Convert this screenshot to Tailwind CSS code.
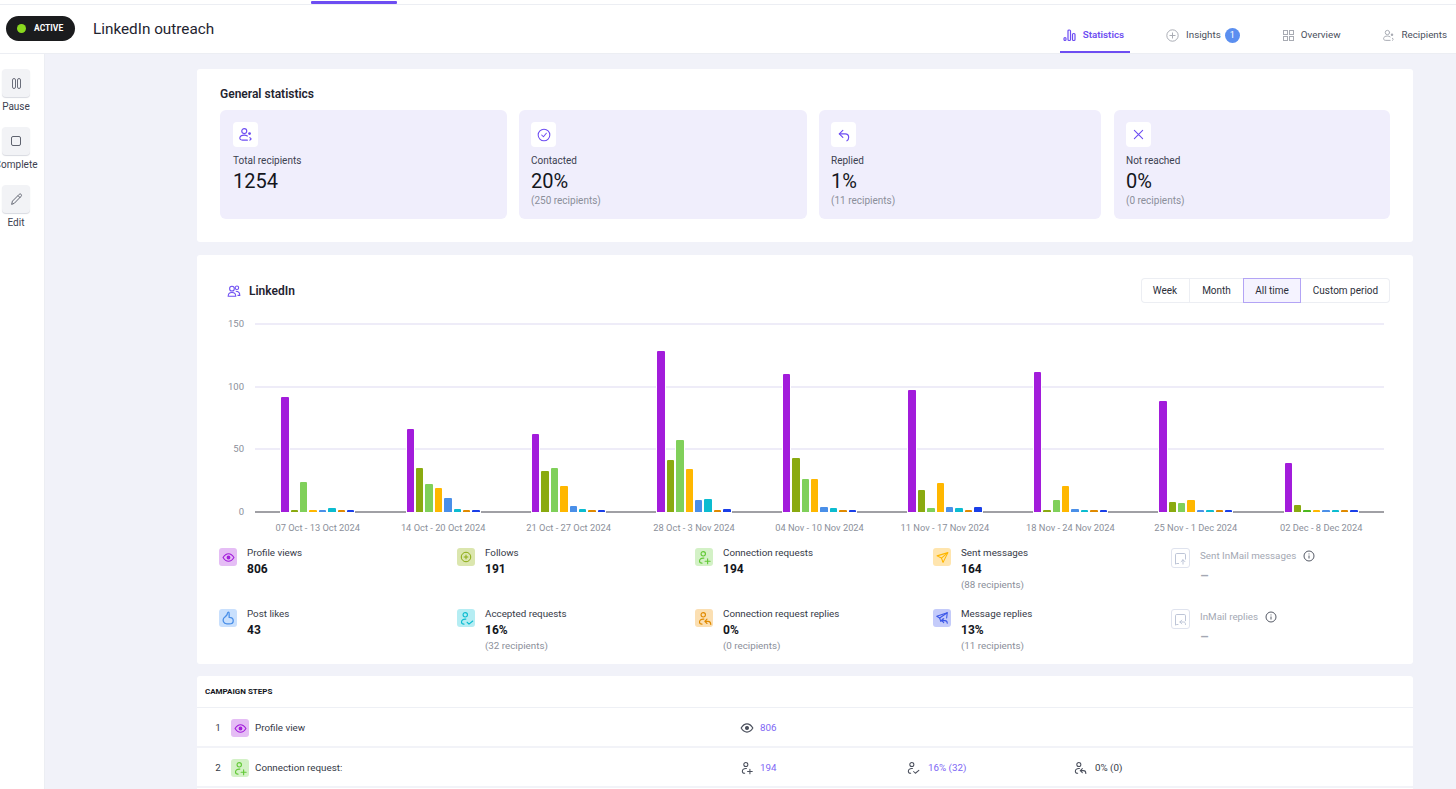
<!DOCTYPE html>
<html lang="en">
<head>
<meta charset="utf-8">
<title>LinkedIn outreach</title>
<script src="https://cdn.jsdelivr.net/npm/@tailwindcss/browser@4"></script>
</head>
<body class="h-[789px] w-[1456px] overflow-hidden bg-[#f1f2f9] font-['Roboto',sans-serif] text-[#1f2430]">
<svg class="hidden" width="0" height="0">
  <symbol id="i-eye" viewBox="0 0 24 24" fill="none" stroke="currentColor" stroke-width="2"><path d="M2 12c3-5 6-7 10-7s7 2 10 7c-3 5-6 7-10 7s-7-2-10-7z"/><circle cx="12" cy="12" r="2.5" fill="currentColor"/></symbol>
  <symbol id="i-plus-c" viewBox="0 0 24 24" fill="none" stroke="currentColor" stroke-width="2"><circle cx="12" cy="12" r="9.5"/><path d="M12 7.5v9M7.5 12h9"/></symbol>
  <symbol id="i-padd" viewBox="0 0 24 24" fill="none" stroke="currentColor" stroke-width="1.8" stroke-linecap="round"><circle cx="10" cy="6" r="3.5"/><path d="M11 13c-4-.5-7 1.500-7 4.500 0 2 1.500 3.500 4 3.500"/><path d="M13 18h8M17 14v8"/></symbol>
  <symbol id="i-pchk" viewBox="0 0 24 24" fill="none" stroke="currentColor" stroke-width="1.8" stroke-linecap="round" stroke-linejoin="round"><circle cx="10" cy="6" r="3.500"/><path d="M11 13c-4-.5-7 1.500-7 4.500 0 2 1.500 3.500 4 3.500"/><path d="M13 18l3 3 6-5"/></symbol>
  <symbol id="i-prep" viewBox="0 0 24 24" fill="none" stroke="currentColor" stroke-width="1.8" stroke-linecap="round" stroke-linejoin="round"><circle cx="10" cy="6" r="3.500"/><path d="M11 13c-4-.5-7 1.500-7 4.500 0 2 1.500 3.500 4 3.500"/><path d="M16 13l-3.500 3.500 3.500 3.500M12.500 16.500H18c2 0 4 1.500 4 5"/></symbol>
  <symbol id="i-send" viewBox="0 0 24 24" fill="none" stroke="currentColor" stroke-width="2" stroke-linejoin="round"><path d="M22 3L2 9l8 4 3 8z"/><path d="M22 3L10 13"/></symbol>
  <symbol id="i-sendrep" viewBox="0 0 24 24" fill="none" stroke="currentColor" stroke-width="1.800" stroke-linejoin="round" stroke-linecap="round"><path d="M21 3L3 9l5 3 2 6 3-4"/><path d="M21 3l-1 9M21 3L8 12"/><path d="M15 13l-3.500 3.500L15 20M11.500 16.500H17c2 0 4 1 4 4.500"/></symbol>
  <symbol id="i-like" viewBox="0 0 24 24" fill="none" stroke="currentColor" stroke-width="2.200" stroke-linejoin="round"><path d="M13 2c-2 0-2 2-2.500 4S6 10 4.500 12.500C2.500 16 4 22 10 22h4c4 0 7-2 7-5.500 0-4-3-5.500-7-5.500V5c0-2-.5-3-1-3z"/></symbol>
  <symbol id="i-im-up" viewBox="0 0 24 24" fill="none" stroke="currentColor" stroke-width="1.500" stroke-linecap="round" stroke-linejoin="round"><path d="M9 20H6l-2 1V6a2 2 0 0 1 2-2h12a2 2 0 0 1 2 2v7"/><path d="M16 21v-7M13 17l3-3 3 3"/></symbol>
  <symbol id="i-im-rep" viewBox="0 0 24 24" fill="none" stroke="currentColor" stroke-width="1.500" stroke-linecap="round" stroke-linejoin="round"><path d="M8 20H6l-2 1V6a2 2 0 0 1 2-2h12a2 2 0 0 1 2 2v8"/><path d="M14 13l-3 3 3 3M11 16h6c2 0 3 1 3 4"/></symbol>
  <symbol id="i-info" viewBox="0 0 24 24" fill="none" stroke="currentColor" stroke-width="2"><circle cx="12" cy="12" r="10"/><path d="M12 11v6M12 7v1.800"/></symbol>
  <symbol id="i-rcp" viewBox="0 0 24 24" fill="none" stroke="currentColor" stroke-width="1.800" stroke-linecap="round"><circle cx="10" cy="6.500" r="4"/><path d="M15 21H7c-3 0-4.500-1.500-4-4 .5-2.500 3-4 7-4 2 0 3.500.5 5 1.500"/><circle cx="18.500" cy="10.500" r="2.300" fill="currentColor" stroke="none"/><path d="M19 17l2 2-2 2"/></symbol>
</svg>

<div class="h-[5px] border-b border-[#eceef3] bg-white pt-[1px]">
  <div class="ml-[311px] h-[3px] w-[86px] rounded-[1px] bg-[#6d4df2]"></div>
</div>

<header class="flex h-[49px] items-stretch border-b border-[#eceef3] bg-white">
  <div class="ml-[6px] mt-[11px] flex h-[25px] w-[69px] items-center rounded-full bg-[#1b1c1e] pl-[11px]">
    <span class="h-[9px] w-[9px] rounded-full bg-[#8ad91f]"></span>
    <span class="ml-[8px] text-[8.500px] font-bold text-white">ACTIVE</span>
  </div>
  <h1 class="ml-[18px] mt-[14px] h-[20px] text-[15.300px] leading-[20px] font-normal">LinkedIn outreach</h1>
  <nav class="ml-auto mr-[6px] flex gap-[35px] text-[9.800px] text-[#4a4f5c]">
    <div class="-mr-[2px] flex items-center gap-[7px] border-b-2 border-[#6d4df2] pl-[3px] pr-[6px] pt-[14px] font-semibold text-[#6d4df2]">
      <svg class="h-[14px] w-[13px]" viewBox="0 0 13 14" fill="none" stroke="currentColor" stroke-width="1.200"><rect x="1" y="9.500" width="2" height="3" rx="1"/><rect x="5" y="2" width="2.500" height="10.500" rx="1"/><rect x="9.500" y="5.500" width="2.500" height="7" rx="1"/></svg>
      <span>Statistics</span>
    </div>
    <div class="mr-[2px] flex items-center px-[3px] pt-[13px]">
      <svg class="h-[13px] w-[13px] text-[#a8abb3]" viewBox="0 0 24 24" fill="none" stroke="currentColor" stroke-width="1.800"><circle cx="12" cy="12" r="10.500"/><path d="M12 6.500v11M6.500 12h11"/></svg>
      <span class="ml-[7px]">Insights</span>
      <span class="ml-[4px] flex h-[15px] w-[15px] items-center justify-center rounded-full bg-[#5b8ff0] text-[9px] text-white">1</span>
    </div>
    <div class="flex items-center gap-[7px] px-[3px] pt-[13px]">
      <svg class="h-[11px] w-[11px] text-[#a8abb3]" viewBox="0 0 11 11" fill="none" stroke="currentColor" stroke-width="1"><rect x=".5" y=".5" width="4" height="4"/><rect x="6.500" y=".5" width="4" height="4"/><rect x=".5" y="6.500" width="4" height="4"/><rect x="6.500" y="6.500" width="4" height="4"/></svg>
      <span>Overview</span>
    </div>
    <div class="flex items-center gap-[7px] px-[3px] pt-[13px]">
      <svg class="h-[13px] w-[13px] text-[#a8abb3]"><use href="#i-rcp"/></svg>
      <span>Recipients</span>
    </div>
  </nav>
</header>

<div class="flex h-[735px]">
  <aside class="flex w-[45px] shrink-0 flex-col gap-[13px] border-r border-[#eceef3] bg-white pt-[15px] text-[10px] leading-[14px] text-[#3c4150]">
    <div class="flex w-[32px] flex-col items-center gap-[3px] whitespace-nowrap">
      <div class="flex h-[28px] w-[28px] items-center justify-center rounded-[4px] bg-[#f2f3f6] shadow-[0_1px_1px_#d8dae0]">
        <svg class="h-[11px] w-[9px] text-[#6b6f7b]" viewBox="0 0 9 11" fill="none" stroke="currentColor" stroke-width="1"><rect x=".5" y=".5" width="3" height="10" rx="1.500"/><rect x="5.500" y=".5" width="3" height="10" rx="1.500"/></svg>
      </div>
      <span>Pause</span>
    </div>
    <div class="flex w-[32px] flex-col items-center gap-[3px] whitespace-nowrap">
      <div class="flex h-[28px] w-[28px] items-center justify-center rounded-[4px] bg-[#f2f3f6] shadow-[0_1px_1px_#d8dae0]">
        <span class="h-[10px] w-[10px] rounded-[2px] border border-[#5f636f]"></span>
      </div>
      <span>Complete</span>
    </div>
    <div class="flex w-[32px] flex-col items-center gap-[3px] whitespace-nowrap">
      <div class="flex h-[28px] w-[28px] items-center justify-center rounded-[4px] bg-[#f2f3f6] shadow-[0_1px_1px_#d8dae0]">
        <svg class="h-[13px] w-[13px] text-[#5f636f]" viewBox="0 0 24 24" fill="none" stroke="currentColor" stroke-width="1.800" stroke-linejoin="round"><path d="M3 21l1.500-6L17 2.500c1-1 2.500-1 3.500 0s1 2.500 0 3.500L8 19z"/><path d="M15 5l4 4"/></svg>
      </div>
      <span>Edit</span>
    </div>
  </aside>

  <main class="flex flex-1 flex-col pl-[152px] pr-[43px] pt-[15px]">
    <section class="h-[173px] rounded-[3px] bg-white px-[23px] pt-[18px]">
      <h2 class="h-[14px] text-[12px] leading-[14px] font-semibold">General statistics</h2>
      <div class="mt-[9px] grid grid-cols-[287px_288px_282px_277px] gap-[12px]">
        <div class="h-[109px] rounded-[6px] bg-[#f0eefc] pl-[13px] pt-[12px]">
          <div class="flex h-[25px] w-[25px] items-center justify-center rounded-[4px] bg-white text-[#6d4df2]"><svg class="h-[15px] w-[15px]"><use href="#i-rcp"/></svg></div>
          <p class="mt-[7px] text-[10px] leading-[13px] text-[#3c4150]">Total recipients</p>
          <p class="mt-[1px] text-[20px] leading-[26px] font-normal text-[#14161c]">1254</p>
        </div>
        <div class="h-[109px] rounded-[6px] bg-[#f0eefc] pl-[12px] pt-[12px]">
          <div class="flex h-[25px] w-[25px] items-center justify-center rounded-[4px] bg-white text-[#6d4df2]"><svg class="h-[14px] w-[14px]" viewBox="0 0 24 24" fill="none" stroke="currentColor" stroke-width="1.800" stroke-linecap="round" stroke-linejoin="round"><circle cx="12" cy="12" r="10"/><path d="M8 12l3 3 5-6"/></svg></div>
          <p class="mt-[7px] text-[10px] leading-[13px] text-[#3c4150]">Contacted</p>
          <p class="mt-[1px] text-[20px] leading-[26px] font-normal text-[#14161c]">20%</p>
          <p class="text-[10px] leading-[13px] text-[#8b8f9a]">(250 recipients)</p>
        </div>
        <div class="h-[109px] rounded-[6px] bg-[#f0eefc] pl-[12px] pt-[12px]">
          <div class="flex h-[25px] w-[25px] items-center justify-center rounded-[4px] bg-white text-[#6d4df2]"><svg class="h-[14px] w-[14px]" viewBox="0 0 24 24" fill="none" stroke="currentColor" stroke-width="2" stroke-linecap="round" stroke-linejoin="round"><path d="M10 4L4 10l6 6"/><path d="M4 10h10c4 0 6 3 6 6s-1 5-3 6"/></svg></div>
          <p class="mt-[7px] text-[10px] leading-[13px] text-[#3c4150]">Replied</p>
          <p class="mt-[1px] text-[20px] leading-[26px] font-normal text-[#14161c]">1%</p>
          <p class="text-[10px] leading-[13px] text-[#8b8f9a]">(11 recipients)</p>
        </div>
        <div class="ml-[1px] h-[109px] rounded-[6px] bg-[#f0eefc] pl-[12px] pt-[12px]">
          <div class="flex h-[25px] w-[25px] items-center justify-center rounded-[4px] bg-white text-[#6d4df2]"><svg class="h-[11px] w-[11px]" viewBox="0 0 24 24" fill="none" stroke="currentColor" stroke-width="2.400" stroke-linecap="round"><path d="M3 3l18 18M21 3L3 21"/></svg></div>
          <p class="mt-[7px] text-[10px] leading-[13px] text-[#3c4150]">Not reached</p>
          <p class="mt-[1px] text-[20px] leading-[26px] font-normal text-[#14161c]">0%</p>
          <p class="text-[10px] leading-[13px] text-[#8b8f9a]">(0 recipients)</p>
        </div>
      </div>
    </section>

    <section class="mt-[13px] h-[409px] rounded-[3px] bg-white pt-[23px]">
      <div class="flex h-[25px] items-center pl-[30px] pr-[23px]">
        <svg class="h-[14px] w-[14px] text-[#6d4df2]" viewBox="0 0 24 24" fill="none" stroke="currentColor" stroke-width="1.800"><circle cx="8.500" cy="8" r="4"/><circle cx="17" cy="6.500" r="3"/><path d="M2 21c0-4.500 2.500-6.500 6.500-6.500S15 16.500 15 21z"/><path d="M15 12.500c4 0 7 2 7 7h-4"/></svg>
        <h2 class="ml-[8px] text-[12px] font-semibold">LinkedIn</h2>
        <div class="ml-auto flex h-[25px] rounded-[4px] text-[10px] text-[#2b2f3a] shadow-[0_0_0_1px_#eceef3_inset]">
          <span class="flex w-[49px] items-center justify-center border-r border-[#eceef3]">Week</span>
          <span class="flex w-[53px] items-center justify-center">Month</span>
          <span class="flex w-[58px] items-center justify-center border border-[#b3a4f5] bg-[#f5f3ff]">All time</span>
          <span class="flex w-[89px] items-center justify-center">Custom period</span>
        </div>
      </div>

      <div class="relative ml-[58px] mr-[29px] mt-[20px] h-[190px]">
        <div class="flex h-full flex-col justify-between text-[9.500px] text-[#8b8f9a]">
          <div class="relative h-[2px] bg-[#eeecf8]"><span class="absolute right-[calc(100%+11px)] top-[-6px] leading-[14px]">150</span></div>
          <div class="relative h-[2px] bg-[#eeecf8]"><span class="absolute right-[calc(100%+11px)] top-[-6px] leading-[14px]">100</span></div>
          <div class="relative h-[2px] bg-[#eeecf8]"><span class="absolute right-[calc(100%+11px)] top-[-6px] leading-[14px]">50</span></div>
          <div class="relative h-[2px] bg-[#a0a0a5]"><span class="absolute right-[calc(100%+11px)] top-[-6px] leading-[14px]">0</span></div>
        </div>
        <div class="absolute inset-x-0 bottom-[1px] grid h-[188px] grid-cols-9">
          <div class="flex items-end justify-center gap-[2px]">
            <div class="w-[7.400px] rounded-t-[1px] bg-[#a21cdb] ring-1 ring-white" style="height:115px"></div><div class="w-[7.400px] rounded-t-[1px] bg-[#8aaa10] ring-1 ring-white" style="height:2px"></div><div class="w-[7.400px] rounded-t-[1px] bg-[#80d05a] ring-1 ring-white" style="height:30px"></div><div class="w-[7.400px] rounded-t-[1px] bg-[#ffb700] ring-1 ring-white" style="height:2px"></div><div class="w-[7.400px] rounded-t-[1px] bg-[#4a8fe8] ring-1 ring-white" style="height:2px"></div><div class="w-[7.400px] rounded-t-[1px] bg-[#0cbcd0] ring-1 ring-white" style="height:4px"></div><div class="w-[7.400px] rounded-t-[1px] bg-[#e08a00] ring-1 ring-white" style="height:2px"></div><div class="w-[7.400px] rounded-t-[1px] bg-[#1a3fe8] ring-1 ring-white" style="height:2px"></div>
          </div>
          <div class="flex items-end justify-center gap-[2px]">
            <div class="w-[7.400px] rounded-t-[1px] bg-[#a21cdb] ring-1 ring-white" style="height:83px"></div><div class="w-[7.400px] rounded-t-[1px] bg-[#8aaa10] ring-1 ring-white" style="height:44px"></div><div class="w-[7.400px] rounded-t-[1px] bg-[#80d05a] ring-1 ring-white" style="height:28px"></div><div class="w-[7.400px] rounded-t-[1px] bg-[#ffb700] ring-1 ring-white" style="height:24px"></div><div class="w-[7.400px] rounded-t-[1px] bg-[#4a8fe8] ring-1 ring-white" style="height:14px"></div><div class="w-[7.400px] rounded-t-[1px] bg-[#0cbcd0] ring-1 ring-white" style="height:3px"></div><div class="w-[7.400px] rounded-t-[1px] bg-[#e08a00] ring-1 ring-white" style="height:2px"></div><div class="w-[7.400px] rounded-t-[1px] bg-[#1a3fe8] ring-1 ring-white" style="height:2px"></div>
          </div>
          <div class="flex items-end justify-center gap-[2px]">
            <div class="w-[7.400px] rounded-t-[1px] bg-[#a21cdb] ring-1 ring-white" style="height:78px"></div><div class="w-[7.400px] rounded-t-[1px] bg-[#8aaa10] ring-1 ring-white" style="height:41px"></div><div class="w-[7.400px] rounded-t-[1px] bg-[#80d05a] ring-1 ring-white" style="height:44px"></div><div class="w-[7.400px] rounded-t-[1px] bg-[#ffb700] ring-1 ring-white" style="height:26px"></div><div class="w-[7.400px] rounded-t-[1px] bg-[#4a8fe8] ring-1 ring-white" style="height:6px"></div><div class="w-[7.400px] rounded-t-[1px] bg-[#0cbcd0] ring-1 ring-white" style="height:3px"></div><div class="w-[7.400px] rounded-t-[1px] bg-[#e08a00] ring-1 ring-white" style="height:2px"></div><div class="w-[7.400px] rounded-t-[1px] bg-[#1a3fe8] ring-1 ring-white" style="height:2px"></div>
          </div>
          <div class="flex items-end justify-center gap-[2px]">
            <div class="w-[7.400px] rounded-t-[1px] bg-[#a21cdb] ring-1 ring-white" style="height:161px"></div><div class="w-[7.400px] rounded-t-[1px] bg-[#8aaa10] ring-1 ring-white" style="height:52px"></div><div class="w-[7.400px] rounded-t-[1px] bg-[#80d05a] ring-1 ring-white" style="height:72px"></div><div class="w-[7.400px] rounded-t-[1px] bg-[#ffb700] ring-1 ring-white" style="height:43px"></div><div class="w-[7.400px] rounded-t-[1px] bg-[#4a8fe8] ring-1 ring-white" style="height:12px"></div><div class="w-[7.400px] rounded-t-[1px] bg-[#0cbcd0] ring-1 ring-white" style="height:13px"></div><div class="w-[7.400px] rounded-t-[1px] bg-[#e08a00] ring-1 ring-white" style="height:2px"></div><div class="w-[7.400px] rounded-t-[1px] bg-[#1a3fe8] ring-1 ring-white" style="height:3px"></div>
          </div>
          <div class="flex items-end justify-center gap-[2px]">
            <div class="w-[7.400px] rounded-t-[1px] bg-[#a21cdb] ring-1 ring-white" style="height:138px"></div><div class="w-[7.400px] rounded-t-[1px] bg-[#8aaa10] ring-1 ring-white" style="height:54px"></div><div class="w-[7.400px] rounded-t-[1px] bg-[#80d05a] ring-1 ring-white" style="height:33px"></div><div class="w-[7.400px] rounded-t-[1px] bg-[#ffb700] ring-1 ring-white" style="height:33px"></div><div class="w-[7.400px] rounded-t-[1px] bg-[#4a8fe8] ring-1 ring-white" style="height:5px"></div><div class="w-[7.400px] rounded-t-[1px] bg-[#0cbcd0] ring-1 ring-white" style="height:4px"></div><div class="w-[7.400px] rounded-t-[1px] bg-[#e08a00] ring-1 ring-white" style="height:2px"></div><div class="w-[7.400px] rounded-t-[1px] bg-[#1a3fe8] ring-1 ring-white" style="height:2px"></div>
          </div>
          <div class="flex items-end justify-center gap-[2px]">
            <div class="w-[7.400px] rounded-t-[1px] bg-[#a21cdb] ring-1 ring-white" style="height:122px"></div><div class="w-[7.400px] rounded-t-[1px] bg-[#8aaa10] ring-1 ring-white" style="height:22px"></div><div class="w-[7.400px] rounded-t-[1px] bg-[#80d05a] ring-1 ring-white" style="height:4px"></div><div class="w-[7.400px] rounded-t-[1px] bg-[#ffb700] ring-1 ring-white" style="height:29px"></div><div class="w-[7.400px] rounded-t-[1px] bg-[#4a8fe8] ring-1 ring-white" style="height:5px"></div><div class="w-[7.400px] rounded-t-[1px] bg-[#0cbcd0] ring-1 ring-white" style="height:4px"></div><div class="w-[7.400px] rounded-t-[1px] bg-[#e08a00] ring-1 ring-white" style="height:2px"></div><div class="w-[7.400px] rounded-t-[1px] bg-[#1a3fe8] ring-1 ring-white" style="height:5px"></div>
          </div>
          <div class="flex items-end justify-center gap-[2px]">
            <div class="w-[7.400px] rounded-t-[1px] bg-[#a21cdb] ring-1 ring-white" style="height:140px"></div><div class="w-[7.400px] rounded-t-[1px] bg-[#8aaa10] ring-1 ring-white" style="height:2px"></div><div class="w-[7.400px] rounded-t-[1px] bg-[#80d05a] ring-1 ring-white" style="height:12px"></div><div class="w-[7.400px] rounded-t-[1px] bg-[#ffb700] ring-1 ring-white" style="height:26px"></div><div class="w-[7.400px] rounded-t-[1px] bg-[#4a8fe8] ring-1 ring-white" style="height:3px"></div><div class="w-[7.400px] rounded-t-[1px] bg-[#0cbcd0] ring-1 ring-white" style="height:2px"></div><div class="w-[7.400px] rounded-t-[1px] bg-[#e08a00] ring-1 ring-white" style="height:2px"></div><div class="w-[7.400px] rounded-t-[1px] bg-[#1a3fe8] ring-1 ring-white" style="height:2px"></div>
          </div>
          <div class="flex items-end justify-center gap-[2px]">
            <div class="w-[7.400px] rounded-t-[1px] bg-[#a21cdb] ring-1 ring-white" style="height:111px"></div><div class="w-[7.400px] rounded-t-[1px] bg-[#8aaa10] ring-1 ring-white" style="height:10px"></div><div class="w-[7.400px] rounded-t-[1px] bg-[#80d05a] ring-1 ring-white" style="height:9px"></div><div class="w-[7.400px] rounded-t-[1px] bg-[#ffb700] ring-1 ring-white" style="height:12px"></div><div class="w-[7.400px] rounded-t-[1px] bg-[#4a8fe8] ring-1 ring-white" style="height:2px"></div><div class="w-[7.400px] rounded-t-[1px] bg-[#0cbcd0] ring-1 ring-white" style="height:2px"></div><div class="w-[7.400px] rounded-t-[1px] bg-[#e08a00] ring-1 ring-white" style="height:2px"></div><div class="w-[7.400px] rounded-t-[1px] bg-[#1a3fe8] ring-1 ring-white" style="height:2px"></div>
          </div>
          <div class="flex items-end justify-center gap-[2px]">
            <div class="w-[7.400px] rounded-t-[1px] bg-[#a21cdb] ring-1 ring-white" style="height:49px"></div><div class="w-[7.400px] rounded-t-[1px] bg-[#8aaa10] ring-1 ring-white" style="height:7px"></div><div class="w-[7.400px] rounded-t-[1px] bg-[#4db81f] ring-1 ring-white" style="height:2px"></div><div class="w-[7.400px] rounded-t-[1px] bg-[#ffb700] ring-1 ring-white" style="height:2px"></div><div class="w-[7.400px] rounded-t-[1px] bg-[#4a8fe8] ring-1 ring-white" style="height:2px"></div><div class="w-[7.400px] rounded-t-[1px] bg-[#0cbcd0] ring-1 ring-white" style="height:2px"></div><div class="w-[7.400px] rounded-t-[1px] bg-[#e08a00] ring-1 ring-white" style="height:2px"></div><div class="w-[7.400px] rounded-t-[1px] bg-[#1a3fe8] ring-1 ring-white" style="height:2px"></div>
          </div>
        </div>
      </div>
      <div class="ml-[58px] mr-[29px] mt-[8px] grid grid-cols-9 text-center text-[9.300px] leading-[14px] whitespace-nowrap text-[#8b8f9a]">
        <span>07 Oct - 13 Oct 2024</span><span>14 Oct - 20 Oct 2024</span><span>21 Oct - 27 Oct 2024</span><span>28 Oct - 3 Nov 2024</span><span>04 Nov - 10 Nov 2024</span><span>11 Nov - 17 Nov 2024</span><span>18 Nov - 24 Nov 2024</span><span>25 Nov - 1 Dec 2024</span><span>02 Dec - 8 Dec 2024</span>
      </div>

      <div class="ml-[22px] mt-[13px] grid grid-cols-[238px_238px_238px_238px_238px] grid-rows-[61px_61px] text-[9.800px] leading-[16px] text-[#353a47]">
        <div class="flex gap-[10px]"><span class="flex h-[18px] w-[18px] items-center justify-center rounded-[3px] bg-[#e5bdf5] text-[#a21cdb]"><svg class="h-[13px] w-[13px]"><use href="#i-eye"/></svg></span><div class="-mt-[3px]"><p>Profile views</p><p class="text-[12px] font-bold text-[#14161c]">806</p></div></div>
        <div class="flex gap-[10px]"><span class="flex h-[18px] w-[18px] items-center justify-center rounded-[3px] bg-[#dbe6ae] text-[#8aaa10]"><svg class="h-[12px] w-[12px]"><use href="#i-plus-c"/></svg></span><div class="-mt-[3px]"><p>Follows</p><p class="text-[12px] font-bold text-[#14161c]">191</p></div></div>
        <div class="flex gap-[10px]"><span class="flex h-[18px] w-[18px] items-center justify-center rounded-[3px] bg-[#d3f1c6] text-[#62c936]"><svg class="h-[15px] w-[15px]"><use href="#i-padd"/></svg></span><div class="-mt-[3px]"><p>Connection requests</p><p class="text-[12px] font-bold text-[#14161c]">194</p></div></div>
        <div class="flex gap-[10px]"><span class="flex h-[18px] w-[18px] items-center justify-center rounded-[3px] bg-[#ffe5ae] text-[#ffb700]"><svg class="h-[13px] w-[13px]"><use href="#i-send"/></svg></span><div class="-mt-[3px]"><p>Sent messages</p><p class="text-[12px] font-bold text-[#14161c]">164</p><p class="text-[#8b8f9a]">(88 recipients)</p></div></div>
        <div class="flex gap-[10px]"><span class="flex h-[20px] w-[19px] items-center justify-center rounded-[3px] border border-[#dfe3ee] text-[#b9c1d4]"><svg class="h-[15px] w-[15px]"><use href="#i-im-up"/></svg></span><div><p class="flex items-center gap-[7px] text-[#a4a8b3]">Sent InMail messages <svg class="h-[12px] w-[12px] text-[#555a66]"><use href="#i-info"/></svg></p><p class="mt-[4px] text-[14px] font-medium text-[#a4a8b3]">–</p></div></div>
        <div class="flex gap-[10px]"><span class="flex h-[18px] w-[18px] items-center justify-center rounded-[3px] bg-[#c9e0fd] text-[#4a8fe8]"><svg class="h-[14px] w-[14px]"><use href="#i-like"/></svg></span><div class="-mt-[3px]"><p>Post likes</p><p class="text-[12px] font-bold text-[#14161c]">43</p></div></div>
        <div class="flex gap-[10px]"><span class="flex h-[18px] w-[18px] items-center justify-center rounded-[3px] bg-[#b5edf3] text-[#0cbcd0]"><svg class="h-[15px] w-[15px]"><use href="#i-pchk"/></svg></span><div class="-mt-[3px]"><p>Accepted requests</p><p class="text-[12px] font-bold text-[#14161c]">16%</p><p class="text-[#8b8f9a]">(32 recipients)</p></div></div>
        <div class="flex gap-[10px]"><span class="flex h-[18px] w-[18px] items-center justify-center rounded-[3px] bg-[#fbdfb2] text-[#e08a00]"><svg class="h-[15px] w-[15px]"><use href="#i-prep"/></svg></span><div class="-mt-[3px]"><p>Connection request replies</p><p class="text-[12px] font-bold text-[#14161c]">0%</p><p class="text-[#8b8f9a]">(0 recipients)</p></div></div>
        <div class="flex gap-[10px]"><span class="flex h-[18px] w-[18px] items-center justify-center rounded-[3px] bg-[#c4cbfa] text-[#3a56e8]"><svg class="h-[14px] w-[14px]"><use href="#i-sendrep"/></svg></span><div class="-mt-[3px]"><p>Message replies</p><p class="text-[12px] font-bold text-[#14161c]">13%</p><p class="text-[#8b8f9a]">(11 recipients)</p></div></div>
        <div class="flex gap-[10px]"><span class="flex h-[20px] w-[19px] items-center justify-center rounded-[3px] border border-[#dfe3ee] text-[#b9c1d4]"><svg class="h-[15px] w-[15px]"><use href="#i-im-rep"/></svg></span><div><p class="flex items-center gap-[7px] text-[#a4a8b3]">InMail replies <svg class="h-[12px] w-[12px] text-[#555a66]"><use href="#i-info"/></svg></p><p class="mt-[4px] text-[14px] font-medium text-[#a4a8b3]">–</p></div></div>
      </div>
    </section>

    <section class="mt-[12px] flex-1 rounded-t-[3px] bg-white text-[9.800px] text-[#353a47]">
      <h2 class="flex h-[32px] items-center border-b border-[#eef0f5] pl-[8px] text-[8px] font-bold text-[#14161c]">CAMPAIGN STEPS</h2>
      <div class="flex h-[40px] items-center border-b-2 border-[#f2f3f8] pt-[2px]">
        <span class="ml-[14px] w-[14px] text-center">1</span>
        <span class="ml-[6px] flex h-[18px] w-[18px] items-center justify-center rounded-[3px] bg-[#e5bdf5] text-[#a21cdb]"><svg class="h-[13px] w-[13px]"><use href="#i-eye"/></svg></span>
        <span class="ml-[6px] w-[485px]">Profile view</span>
        <svg class="h-[14px] w-[14px] text-[#4a4f5c]"><use href="#i-eye"/></svg>
        <span class="ml-[6px] text-[#7d66f5]">806</span>
      </div>
      <div class="flex h-[40px] items-center border-b-2 border-[#f2f3f8] pt-[2px]">
        <span class="ml-[14px] w-[14px] text-center">2</span>
        <span class="ml-[6px] flex h-[18px] w-[18px] items-center justify-center rounded-[3px] bg-[#d3f1c6] text-[#62c936]"><svg class="h-[15px] w-[15px]"><use href="#i-padd"/></svg></span>
        <span class="ml-[6px] w-[485px]">Connection request:</span>
        <svg class="h-[14px] w-[14px] text-[#4a4f5c]"><use href="#i-padd"/></svg>
        <span class="ml-[6px] w-[146px] text-[#7d66f5]">194</span>
        <svg class="h-[14px] w-[14px] text-[#4a4f5c]"><use href="#i-pchk"/></svg>
        <span class="ml-[8px] w-[145px] text-[#7d66f5]">16% (32)</span>
        <svg class="h-[14px] w-[14px] text-[#4a4f5c]"><use href="#i-prep"/></svg>
        <span class="ml-[8px]">0% (0)</span>
      </div>
    </section>
  </main>
</div>
</body>
</html>
